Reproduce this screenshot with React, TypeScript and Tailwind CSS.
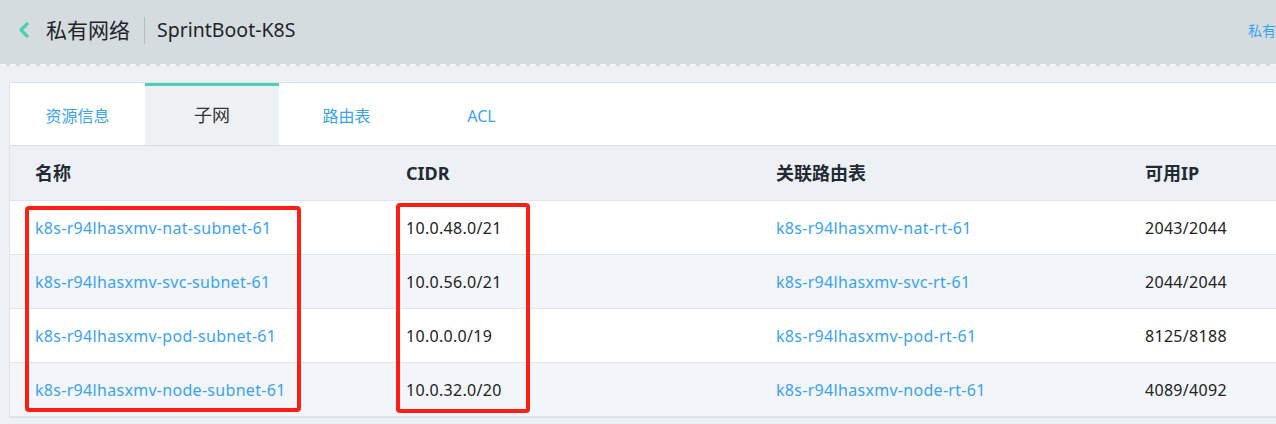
import React from "react";

const rows = [
  { name: "k8s-r94lhasxmv-nat-subnet-61", cidr: "10.0.48.0/21", rt: "k8s-r94lhasxmv-nat-rt-61", ip: "2043/2044" },
  { name: "k8s-r94lhasxmv-svc-subnet-61", cidr: "10.0.56.0/21", rt: "k8s-r94lhasxmv-svc-rt-61", ip: "2044/2044" },
  { name: "k8s-r94lhasxmv-pod-subnet-61", cidr: "10.0.0.0/19", rt: "k8s-r94lhasxmv-pod-rt-61", ip: "8125/8188" },
  { name: "k8s-r94lhasxmv-node-subnet-61", cidr: "10.0.32.0/20", rt: "k8s-r94lhasxmv-node-rt-61", ip: "4089/4092" },
];

const tabs = ["资源信息", "子网", "路由表", "ACL"];

export default function App() {
  return (
    <div
      className="w-[1276px] h-[424px] overflow-hidden bg-[#edf1f4]"
      style={{ fontFamily: '"Noto Sans", "Noto Sans CJK SC", sans-serif' }}
    >
      {/* header */}
      <div className="h-[66px] bg-[#d5dce0] border-b-2 border-dashed border-[#f2f4f6] flex items-center pl-[16px] pr-0">
        <svg width="16" height="16" viewBox="0 0 16 16" className="mr-[14px] -mt-[4px]">
          <path d="M11 2 L5 8 L11 14" fill="none" stroke="#4dcfb0" strokeWidth="3.2" strokeLinecap="round" strokeLinejoin="round" />
        </svg>
        <span className="text-[21px] text-[#1f2429] leading-none -mt-[3px]">私有网络</span>
        <span className="w-px h-[27px] bg-[#b5bcc1] ml-[14px] mr-[12px] -mt-[4px]" />
        <span className="text-[19.5px] text-[#1f2429] leading-none -mt-[4px]">SprintBoot-K8S</span>
        <span className="ml-auto text-[14px] text-[#3aa3ef] -mt-[4px] whitespace-nowrap">私有</span>
      </div>

      {/* card */}
      <div className="relative ml-[9px] mt-[16px] bg-white border border-[#dde3ea] border-r-0">
        <div className="flex h-[63px] border-b border-[#d5dde6]">
          {tabs.map((t, i) => (
            <div
              key={t}
              className={
                i === 1
                  ? "w-[134px] flex items-center justify-center bg-[#edf1f4] border-t-[3px] border-[#4dd0b2] text-[18px] text-[#333]"
                  : "w-[135px] flex items-center justify-center pt-[3px] text-[16px] text-[#3aa3ef]"
              }
            >
              {t}
            </div>
          ))}
        </div>

        <div className="text-[16px] tracking-[0.3px]">
          <div className="grid grid-cols-[371px_370px_369px_1fr] h-[55px] items-center bg-[#edf1f5] border-b border-[#dfe5ec] font-bold text-[18px] tracking-normal text-[#222a33] pl-[25px]">
            <span>名称</span>
            <span>CIDR</span>
            <span>关联路由表</span>
            <span>可用IP</span>
          </div>
          {rows.map((r, i) => (
            <div
              key={r.name}
              className={
                "grid grid-cols-[371px_370px_369px_1fr] h-[54px] items-center pl-[25px] border-b border-[#dfe5ec] " +
                (i % 2 === 0 ? "bg-white" : "bg-[#f2f5f9]")
              }
            >
              <span className="text-[#3aa3ef]">{r.name}</span>
              <span className="text-[#222]">{r.cidr}</span>
              <span className="text-[#3aa3ef]">{r.rt}</span>
              <span className="text-[#222]">{r.ip}</span>
            </div>
          ))}
        </div>

        {/* annotation boxes */}
        <div className="absolute left-[15px] top-[123px] w-[276px] h-[206px] border-[4px] border-[#ff1e14] rounded-[4px] pointer-events-none" />
        <div className="absolute left-[386px] top-[120px] w-[134px] h-[210px] border-[4px] border-[#ff1e14] rounded-[4px] pointer-events-none" />
      </div>
    </div>
  );
}
